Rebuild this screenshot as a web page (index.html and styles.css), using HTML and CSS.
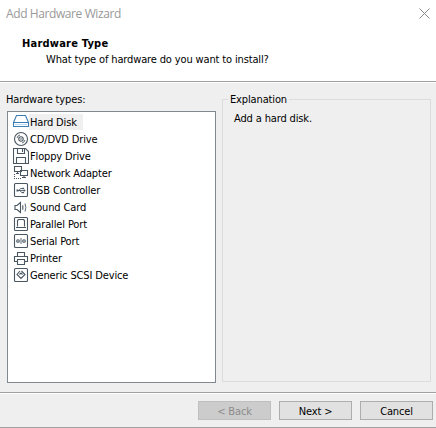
FILE: index.html
```html
<!DOCTYPE html>
<html lang="en">
<head>
<meta charset="utf-8">
<title>Add Hardware Wizard</title>
<link rel="stylesheet" href="styles.css">
</head>
<body>
<div class="wizard">
  <header class="header">
    <div class="titlebar">
      <span class="caption">Add Hardware Wizard</span>
      <svg class="close" width="11" height="11" viewBox="0 0 11 11"><path d="M.5.5l10 10M10.500.5l-10 10"/></svg>
    </div>
    <h1 class="heading">Hardware Type</h1>
    <p class="question">What type of hardware do you want to install?</p>
  </header>
  <main class="content">
    <section class="types">
      <div class="label">Hardware types:</div>
      <ul class="list">
        <li class="item selected"><svg class="icon disk" viewBox="0 0 16 16"><path d="M3.500 1.500h9l3 7h-15zM.5 8.500h15v4H.5z"/><path class="glow" d="M2 10.500h12"/></svg><span>Hard Disk</span></li>
        <li class="item"><svg class="icon" viewBox="0 0 16 16"><circle cx="8" cy="8" r="6.500"/><circle cx="8" cy="8" r="2.200"/><circle class="dot" cx="8" cy="8" r=".8"/><path class="thin" d="M4 7a4 4 0 0 1 3-3M9 12a4 4 0 0 0 3-3"/></svg><span>CD/DVD Drive</span></li>
        <li class="item"><svg class="icon" viewBox="0 0 16 16"><path d="M.5.5h12l3 3v12H.5zM4.500.5v5h7v-5M9.500 1v3M3.500 15.500v-6h9v6"/></svg><span>Floppy Drive</span></li>
        <li class="item"><svg class="icon" viewBox="0 0 16 16"><path d="M1.500 1.500h7v5h-7zM3 8.500h3M4.500 6.500v2M7.500 5.500h7v5h-7zM9 12.500h4M11 10.500v2"/><path class="dash" d="M1.500 9v4.500H9"/></svg><span>Network Adapter</span></li>
        <li class="item"><svg class="icon" viewBox="0 0 16 16"><rect x="1.500" y="1.500" width="13" height="13" rx="1"/><path class="thin" d="M4 8.500h8M6 8.500l1.500-2H10M7 8.500l1.500 2H10"/><path class="dot" d="M3.500 7.500h2v2h-2zM9.500 5.700h1.600v1.600H9.500zM9.500 9.700h1.600v1.600H9.500zM11 7.300l1.800 1.200-1.800 1.200z"/></svg><span>USB Controller</span></li>
        <li class="item"><svg class="icon" viewBox="0 0 16 16"><path d="M2 6.500h2L7.500 3.500v10L4 10.500H2zM9.800 6.200v4.600"/><path class="thin" d="M12 4.500q1.700 4 0 8"/></svg><span>Sound Card</span></li>
        <li class="item"><svg class="icon" viewBox="0 0 16 16"><rect x="1.500" y="1.500" width="13" height="13" rx="1"/><path d="M4.500 10.500V4.500l1-1h5l1 1v6M3 11.500h10"/></svg><span>Parallel Port</span></li>
        <li class="item"><svg class="icon" viewBox="0 0 16 16"><rect x="1.500" y="1.500" width="13" height="13" rx="1"/><circle cx="5" cy="8" r="1.300"/><circle cx="11" cy="8" r="1.300"/><path class="thin" d="M8 5v6"/></svg><span>Serial Port</span></li>
        <li class="item"><svg class="icon" viewBox="0 0 16 16"><path d="M4.500 6V2.500h7V6M4.500 11.500h-3v-5h13v5h-3M4.500 9.500h7v5h-7z"/></svg><span>Printer</span></li>
        <li class="item"><svg class="icon" viewBox="0 0 16 16"><rect x="1.500" y="1.500" width="13" height="13" rx="1"/><path d="M7 4L4 7.500 8 11.500l4-4L8.500 4M6.500 7.500L8 6l1.500 1.500"/></svg><span>Generic SCSI Device</span></li>
      </ul>
    </section>
    <fieldset class="explanation">
      <legend>Explanation</legend>
      <p>Add a hard disk.</p>
    </fieldset>
  </main>
  <footer class="footer">
    <button class="btn" disabled>&lt; Back</button>
    <button class="btn">Next &gt;</button>
    <button class="btn">Cancel</button>
  </footer>
</div>
</body>
</html>
```
FILE: styles.css
```css
* { box-sizing: border-box; }

body {
  margin: 0;
  font-family: "DejaVu Sans Condensed", "DejaVu Sans", sans-serif;
  font-stretch: condensed;
  font-size: 11px;
  line-height: 14px;
  letter-spacing: -0.14px;
  color: #000;
}

.wizard {
  display: flex;
  flex-direction: column;
  width: 436px;
  height: 428px;
  background: #efefef;
  border-bottom: 1px solid #a0a0a0;
}

.header {
  height: 83px;
  background: #fff;
  border-bottom: 1px solid #fff;
  box-shadow: inset 0 -1px #a0a0a0;
}

.titlebar {
  display: flex;
  justify-content: space-between;
  height: 37px;
  padding: 6px 6px 0;
}

.caption {
  font: 12px/16px "Open Sans", sans-serif;
  letter-spacing: -0.4px;
  color: #999;
}

.close {
  margin-top: 2px;
  fill: none;
  stroke: #888;
}

.heading {
  margin: 0 0 2px 22px;
  font-size: 11px;
  line-height: 14px;
  font-weight: bold;
  letter-spacing: 0.22px;
}

.question { margin: 0 0 0 46px; }

.content {
  display: flex;
  gap: 6px;
  height: 309px;
  padding: 9px 5px 0 7px;
}

.types { width: 209px; }

.label {
  height: 19px;
  margin-left: -1px;
  padding-top: 1px;
}

.list {
  height: 272px;
  margin: 0;
  padding: 2px 5px;
  list-style: none;
  background: #fff;
  border: 1px solid #828790;
}

.item {
  display: flex;
  height: 17px;
}

.item span {
  height: 16px;
  padding: 2px 6px 0 1px;
}

.selected span { background: #f0f0f0; }

.icon {
  width: 16px;
  height: 16px;
  fill: none;
  stroke: #4a5760;
  stroke-width: 1.1;
}

.disk { stroke: #3b7db3; }
.glow { stroke: #bddcf3; }
.thin { stroke-width: .9; }
.dash { stroke-dasharray: 1 1; }
.dot { fill: #4a5760; stroke: none; }

.explanation {
  width: 209px;
  height: 290px;
  min-width: 0;
  margin: 0;
  padding: 0 0 0 11px;
  border: 1px solid #dcdcdc;
}

.explanation legend {
  height: 14px;
  margin-left: -6px;
  padding: 1px 2px 0;
}

.explanation p { margin: 6px 0 0; }

.footer {
  display: flex;
  flex: 1;
  justify-content: flex-end;
  gap: 8px;
  padding: 8px 3px 0 0;
  border-top: 1px solid #a0a0a0;
  box-shadow: inset 0 1px #fff;
}

.btn {
  width: 73px;
  height: 19px;
  padding: 2px 0 0;
  font: inherit;
  letter-spacing: inherit;
  color: #000;
  background: #e1e1e1;
  border: 1px solid #adadad;
}

.btn:disabled {
  color: #8b8b8b;
  background: #ccc;
  border-color: #bfbfbf;
}
```
